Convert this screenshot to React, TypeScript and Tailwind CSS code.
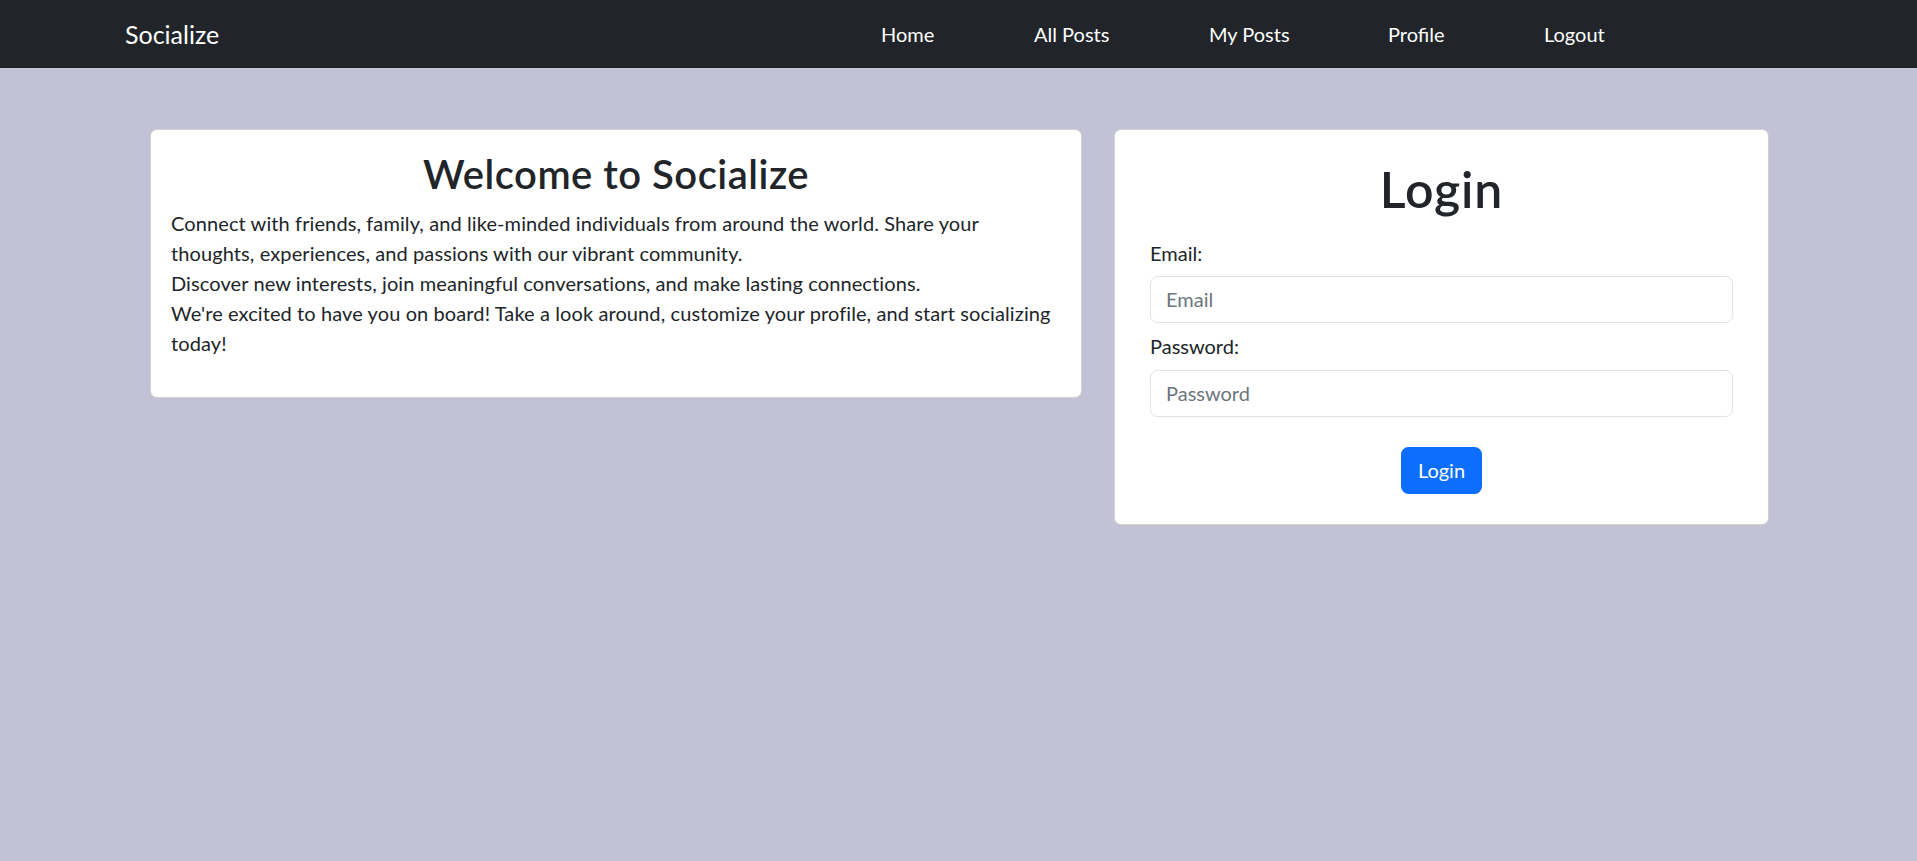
import React from "react";

export default function App() {
  return (
    <div className="min-h-[861px] bg-[#c2c2d7] text-[#212529] font-['Segoe_UI',Lato,'Noto_Sans',sans-serif]">
      <nav className="h-[68px] bg-[#212529] flex items-center pl-[125px]">
        <div className="w-[756px] text-[25px] leading-[37px] text-white">Socialize</div>
        <ul className="flex items-center text-[20px] leading-[30px] text-white">
          <li className="w-[153px]">Home</li>
          <li className="w-[175px]">All Posts</li>
          <li className="w-[179px]">My Posts</li>
          <li className="w-[156px]">Profile</li>
          <li>Logout</li>
        </ul>
      </nav>
      <main className="flex items-start gap-[32px] pl-[150px] pt-[61px]">
        <section className="w-[932px] bg-white border border-[rgba(0,0,0,0.175)] rounded-[7px] p-[20px]">
          <h2 className="text-[40px] leading-[48px] font-semibold text-center tracking-[0.5px] mb-[10px]">Welcome to Socialize</h2>
          <p className="text-[20px] leading-[30px] tracking-[0.1px] mb-[19px] whitespace-nowrap">
            Connect with friends, family, and like-minded individuals from around the world. Share your
            <br />
            thoughts, experiences, and passions with our vibrant community.
            <br />
            Discover new interests, join meaningful conversations, and make lasting connections.
            <br />
            We're excited to have you on board! Take a look around, customize your profile, and start socializing
            <br />
            today!
          </p>
        </section>
        <section className="w-[655px] bg-white border border-[rgba(0,0,0,0.175)] rounded-[7px] p-[20px]">
          <h1 className="text-[50px] leading-[60px] font-semibold tracking-[0.8px] text-center mt-[8.5px] mb-[19px]">Login</h1>
          <div className="px-[15px]">
            <label className="block text-[20px] leading-[30px] mb-[8.5px]">Email:</label>
            <input
              type="email"
              placeholder="Email"
              className="block w-full h-[46.5px] border border-[#dee2e6] rounded-[7.5px] px-[15px] text-[20px] placeholder:text-[#6c757d] outline-none"
            />
            <label className="block text-[20px] leading-[30px] mt-[8px] mb-[9.5px]">Password:</label>
            <input
              type="password"
              placeholder="Password"
              className="block w-full h-[46.5px] border border-[#dee2e6] rounded-[7.5px] px-[15px] text-[20px] placeholder:text-[#6c757d] outline-none"
            />
            <div className="flex justify-center mt-[30px] mb-[10.5px]">
              <button className="h-[47px] px-[16.5px] bg-[#0d6efd] text-white text-[20px] rounded-[7.5px]">Login</button>
            </div>
          </div>
        </section>
      </main>
    </div>
  );
}
